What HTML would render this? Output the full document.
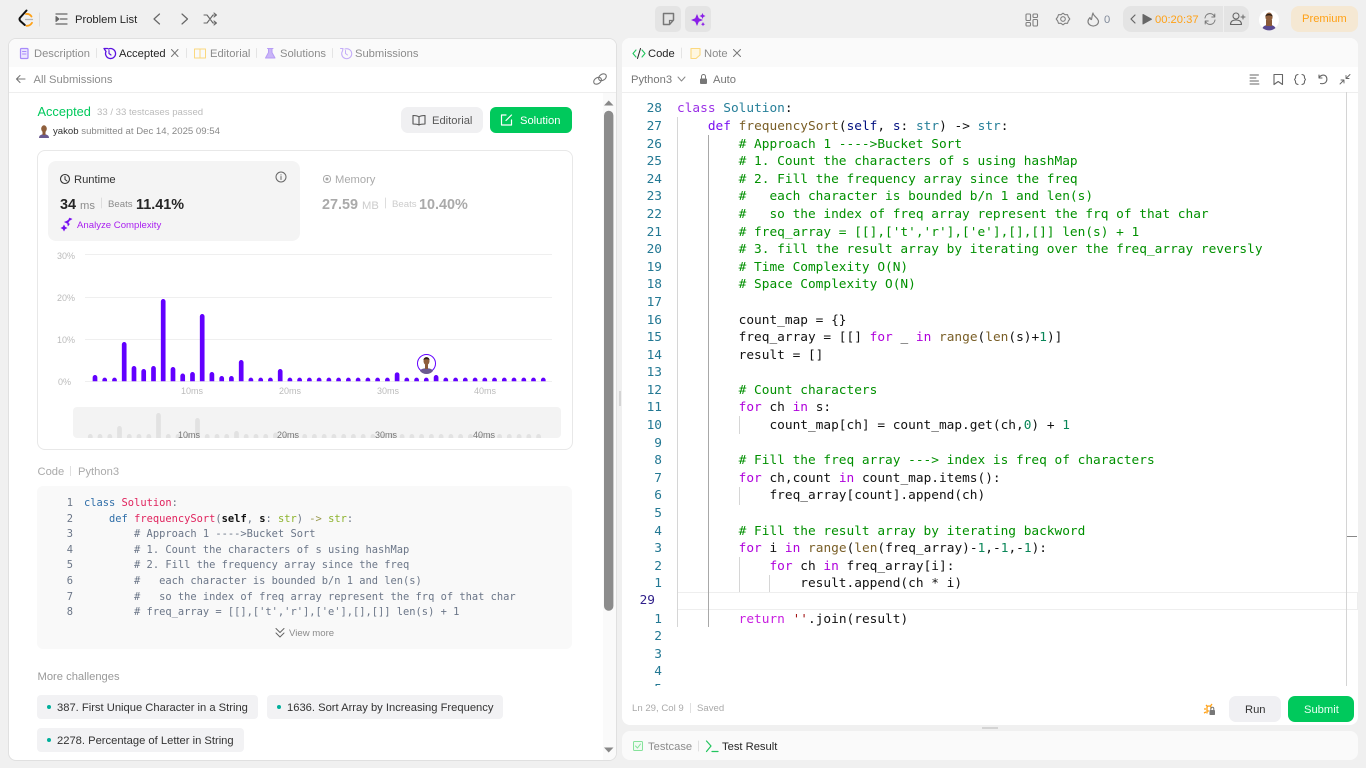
<!DOCTYPE html>
<html lang="en"><head><meta charset="utf-8"><title>Submission</title>
<style>
*{box-sizing:border-box}
html,body{margin:0;padding:0;width:1366px;height:768px;overflow:hidden;background:#f0f0f0;font-family:"Liberation Sans",sans-serif;color:#262626}
.a{position:absolute;white-space:nowrap;line-height:14px;font-size:11.2px;margin-top:1px}
.b{position:absolute}
.g{color:#8c8c8c}
pre{margin:0;position:absolute;white-space:pre;font-family:"DejaVu Sans Mono",monospace}
#ed{left:677px;top:100.4px;font-size:12.8px;line-height:17.586px;color:#111}
#ln{left:630px;width:32px;top:100.4px;height:585.3px;overflow:hidden;font-size:12.8px;line-height:17.586px;color:#237893;text-align:right}
.k1{color:#9a2fe6}.k2{color:#7a10f0}.k3{color:#af00db}.ty{color:#267f99}.fn{color:#795e26}.v{color:#001080}.c{color:#009000}.n{color:#098658}.s{color:#a31515}
.s2{color:#c81fe0}
#sc{left:84px;top:496px;font-size:10.4px;line-height:15.6px;color:#6b7688}
#sn{left:50px;width:23px;top:496px;font-size:10.4px;line-height:15.6px;color:#6b7688;text-align:right}
.h1{color:#2f6ea8}.h2{color:#e0245e}.h3{color:#111;font-weight:bold}.h4{color:#8db32c}.h5{color:#9a9a50}
.sep{position:absolute;width:1px;background:#e0e0e0}
.chip{position:absolute;background:#f2f2f4;border-radius:4px;height:24px}
.dot{position:absolute;left:10px;top:10px;width:4px;height:4px;border-radius:50%;background:#00af9b}
.chip span{position:absolute;left:20px;top:5px;font-size:11.2px;line-height:14px;color:#333;white-space:nowrap}
svg{position:absolute;overflow:visible}
</style></head><body>

<!-- panels -->
<div class="b" style="left:8px;top:38px;width:608.5px;height:722.5px;background:#fff;border:1px solid #e0e0e0;border-radius:8px;overflow:hidden">
  <div class="b" style="left:0;top:0;width:607px;height:28px;background:#fafafa"></div>
  <div class="b" style="left:0;top:53px;width:607px;height:1px;background:#eee"></div>
  <div class="b" style="left:594px;top:54px;width:14px;height:670px;background:#fafafa"></div>
</div>
<div class="b" style="left:622px;top:38px;width:736px;height:687px;background:#fff;border-radius:8px;overflow:hidden">
  <div class="b" style="left:0;top:0;width:736px;height:29px;background:#fafafa"></div>
  <div class="b" style="left:0;top:54px;width:736px;height:1px;background:#eee"></div>
</div>
<div class="b" style="left:622px;top:731px;width:736px;height:29px;background:#fafafa;border-radius:8px"></div>
<div class="b" style="left:618.5px;top:391px;width:2px;height:15px;background:#d4d4d4"></div>
<div class="b" style="left:982px;top:727px;width:16px;height:2px;background:#d4d4d4"></div>

<!-- top bar -->
<svg style="left:0;top:0" width="1366" height="38" fill="none" stroke-linecap="round" stroke-linejoin="round">
  <path d="M26.500 10.500L19.800 18Q19 19.500 20.300 21L24.800 25" stroke="#111" stroke-width="2"/>
  <path d="M26 14Q29.500 13.500 31.500 16.500" stroke="#ffa116" stroke-width="1.800"/>
  <path d="M26.500 25.800Q30 26 32 22.800" stroke="#ffa116" stroke-width="1.800"/>
  <path d="M25.500 19.500H32.500" stroke="#b3b3b3" stroke-width="1.200"/>
  <path d="M39.500 13V26" stroke="#ddd"/>
  <path d="M56 14H67M60.500 19H67M56 24H67" stroke="#666" stroke-width="1.200"/>
  <path d="M56 16.500L59 19L56 21.500Z" fill="#666" stroke="#666"/>
  <path d="M159.500 14L154 19L159.500 24M182 14L187.500 19L182 24" stroke="#666" stroke-width="1.200"/>
  <path d="M204 15H207L213 23H216M204 23H207L213 15H216M214 13L216.500 15L214 17M214 21L216.500 23L214 25" stroke="#666" stroke-width="1.100"/>
</svg>
<div class="a" style="left:75px;top:11.500px">Problem List</div>

<div class="b" style="left:655px;top:6px;width:26px;height:26px;background:#e4e4e4;border-radius:5px"></div>
<div class="b" style="left:685px;top:6px;width:26px;height:26px;background:#e4e4e4;border-radius:5px"></div>
<svg style="left:0;top:0" width="1366" height="38" fill="none">
  <path d="M663.500 13.500H673.500V20L669.500 24.500H663.500Z" stroke="#777" stroke-width="1.500" stroke-linejoin="round"/>
  <path d="M669.500 24.500V20.500H673.500" stroke="#777" stroke-width="1.200"/>
  <path d="M697 14L698.800 18.200L703 20L698.800 21.800L697 26L695.200 21.800L691 20L695.200 18.200Z M702.500 13L703.400 15L705.500 16L703.400 17L702.500 19L701.600 17L699.500 16L701.600 15Z M703 22L703.700 23.500L705 24.200L703.700 24.900L703 26.200L702.300 24.900L701 24.200L702.300 23.500Z" fill="#8a1fe8"/>
  <g stroke="#808080" stroke-width="1.100">
    <rect x="1026" y="14" width="4.500" height="6.500" rx="1"/><rect x="1033" y="14" width="4.500" height="3.500" rx="1"/><rect x="1026" y="22.500" width="4.500" height="3.500" rx="1"/><rect x="1033" y="19.500" width="4.500" height="6.500" rx="1"/>
    <path d="M1063 13.200L1065 14.700L1067.500 14.700L1068.300 17L1069.800 19L1068.300 21L1067.500 23.300L1065 23.300L1063 24.800L1061 23.300L1058.500 23.300L1057.700 21L1056.200 19L1057.700 17L1058.500 14.700L1061 14.700Z" stroke-linejoin="round"/>
    <circle cx="1063" cy="19" r="2.300"/>
    <path d="M1093 13C1093 16 1098.500 18 1098.500 21.500A5.200 4.500 0 0 1 1088 21.500C1088 20 1089 18.500 1090 17.500C1090.300 19 1091 19.500 1091.500 19.500C1092 17.500 1092 15 1093 13Z" stroke-width="1.200" stroke-linejoin="round"/>
  </g>
</svg>
<div class="a" style="left:1104px;top:11.500px;color:#808a9a">0</div>

<div class="b" style="left:1123px;top:6px;width:126px;height:26px;background:#e4e4e4;border-radius:8px"></div>
<div class="b" style="left:1223px;top:6px;width:1px;height:26px;background:#f0f0f0"></div>
<svg style="left:0;top:0" width="1366" height="38" fill="none" stroke-linecap="round" stroke-linejoin="round">
  <path d="M1135 15L1131 19L1135 23" stroke="#666" stroke-width="1.200"/>
  <path d="M1143 14.500V24L1151.500 19.200Z" fill="#666" stroke="#666" stroke-width="1"/>
  <path d="M1205 18A5 5 0 0 1 1214.500 16.500M1215 20A5 5 0 0 1 1205.500 21.500M1214.800 14V17H1211.800M1205.200 24V21H1208.200" stroke="#777" stroke-width="1"/>
  <circle cx="1236" cy="16" r="3" stroke="#666" stroke-width="1.100"/>
  <path d="M1230.500 24.500C1230.500 21 1233 20 1236 20C1239 20 1241.500 21 1241.500 24.500Z" stroke="#666" stroke-width="1.100"/>
  <path d="M1241 17H1245M1243 15V19" stroke="#666" stroke-width="1"/>
</svg>
<div class="a" style="left:1155px;top:11.500px;color:#ffa116">00:20:37</div>

<svg style="left:1259px;top:10px" width="20" height="20" viewBox="0 0 20 20">
  <circle cx="10" cy="10" r="10" fill="#fff"/>
  <path d="M3.500 18C5 15 8 15 10 14.500C12 15 15 15 16.500 18A10 10 0 0 1 3.500 18Z" fill="#5a4a90"/>
  <rect x="7" y="10" width="6" height="6" fill="#8a5a3a"/>
  <ellipse cx="10" cy="7" rx="3.600" ry="4.500" fill="#8f5f3c"/>
  <path d="M6.400 6.500C6.400 3 13.600 3 13.600 6.500C12 5 8 5 6.400 6.500Z" fill="#2b1d14"/>
</svg>
<div class="b" style="left:1291px;top:6px;width:67px;height:26px;background:#f5e8d3;border-radius:8px"></div>
<div class="a" style="left:1302px;top:10.500px;color:#ffa116">Premium</div>

<!-- left tabs -->
<svg style="left:0;top:0" width="620" height="140" fill="none" stroke-linecap="round" stroke-linejoin="round">
  <rect x="20.500" y="48.500" width="7.500" height="10" rx="1" stroke="#a78bfa" fill="#ece6fe" stroke-width="1.200"/>
  <path d="M22.500 51.500H26M22.500 54H26" stroke="#a78bfa"/>
  <path d="M104 48.500H107.500M104 48.500L106 51.500A5 5 0 1 0 108.500 49" stroke="#5b12e0" stroke-width="1.300"/>
  <path d="M109 50.500V53.500L111 55" stroke="#5b12e0" stroke-width="1.100"/>
  <path d="M171.500 49.500L178 56.500M178 49.500L171.500 56.500" stroke="#777" stroke-width="1"/>
  <path d="M194.500 49H200V58H194.500ZM200 49H205.500V58H200Z" stroke="#fbd87f" stroke-width="1"/>
  <path d="M267.500 48.500H273M268.500 48.500V52.500L265.500 58H275L272 52.500V48.500" stroke="#b79cf5" fill="#c9b5f8" stroke-width="1"/>
  <path d="M340.500 48.500H343L342.500 51A5 5 0 1 0 345 49" stroke="#c4adf8" stroke-width="1.100"/>
  <path d="M345.500 50.500V53.500L347.500 55" stroke="#c4adf8" stroke-width="1"/>
  <path d="M96.500 48.500V57.500M186.500 48.500V57.500M256.500 48.500V57.500M332.500 48.500V57.500" stroke="#e4e4e4"/>
  <path d="M25 79H16.500M20 75.500L16.500 79L20 82.500" stroke="#777" stroke-width="1.100"/>
  <g stroke="#777" stroke-width="1.100" transform="rotate(-35 600 79)"><ellipse cx="597" cy="79" rx="4.200" ry="3"/><ellipse cx="603" cy="79" rx="4.200" ry="3"/></g>
</svg>
<div class="a g" style="left:34px;top:46px">Description</div>
<div class="a" style="left:119px;top:46px">Accepted</div>
<div class="a g" style="left:210px;top:46px">Editorial</div>
<div class="a g" style="left:280px;top:46px">Solutions</div>
<div class="a g" style="left:355px;top:46px">Submissions</div>
<div class="a g" style="left:33.500px;top:72px">All Submissions</div>

<!-- scroll -->
<svg style="left:0;top:0" width="620" height="768">
  <path d="M604 105.500L608.700 100.500L613.500 105.500Z" fill="#888"/>
  <path d="M604 115.500A4.700 4.700 0 0 1 613.400 115.500V606A4.700 4.700 0 0 1 604 606Z" fill="#8c8c8c"/>
  <path d="M604 747.500H613.500L608.700 752.500Z" fill="#888"/>
</svg>

<!-- accepted header -->
<div class="a" style="left:37.500px;top:104px;font-size:12.800px;color:#00c95c">Accepted</div>
<div class="a" style="left:97px;top:105px;font-size:9.600px;color:#bbb">33 / 33 testcases passed</div>
<svg style="left:38px;top:125px" width="12" height="13" viewBox="0 0 12 13">
  <path d="M1 13C1 10 3.500 9.500 6 9C8.500 9.500 11 10 11 13Z" fill="#6a5a90"/><rect x="4.500" y="6" width="3" height="4" fill="#8a5a3a"/><ellipse cx="6" cy="3.800" rx="2.800" ry="3.500" fill="#8f5f3c"/>
</svg>
<div class="a" style="left:53px;top:124px;font-size:9.600px;color:#888"><span style="color:#333">yakob</span> submitted at Dec 14, 2025 09:54</div>

<div class="b" style="left:401px;top:107px;width:82px;height:26px;background:#f0f0f2;border-radius:7px"></div>
<div class="a" style="left:432px;top:112.500px;color:#595959">Editorial</div>
<div class="b" style="left:490px;top:107px;width:82px;height:26px;background:#00c95c;border-radius:6px"></div>
<div class="a" style="left:520px;top:112.500px;color:#fff">Solution</div>
<svg style="left:0;top:0" width="620" height="140" fill="none" stroke-linecap="round" stroke-linejoin="round">
  <path d="M419 117C417.500 115.500 415 115.500 413 115.500V124C415 124 417.500 124 419 125C420.500 124 423 124 425 124V115.500C423 115.500 420.500 115.500 419 117ZM419 117V125" stroke="#555" stroke-width="1.100"/>
  <path d="M506 115H501.500V125H511.500V120M506 120.500L511.500 115" stroke="#fff" stroke-width="1.200"/>
</svg>

<!-- card -->
<div class="b" style="left:37px;top:150px;width:535.500px;height:300px;border:1px solid #e8e8e8;border-radius:8px"></div>
<div class="b" style="left:48px;top:161px;width:252px;height:80px;background:#f4f4f4;border-radius:8px"></div>
<svg style="left:0;top:150px" width="620" height="90" fill="none" stroke-linecap="round" stroke-linejoin="round">
  <circle cx="65" cy="29" r="4.500" stroke="#333" stroke-width="1.100"/><path d="M65 26.500V29.500L67 31" stroke="#333"/>
  <circle cx="281" cy="27" r="5" stroke="#666"/><path d="M281 26.500V29.500M281 24.800V25" stroke="#666"/>
  <path d="M68 73L69.500 70.500L72 69L69.500 68L68.500 70L67 71L64.500 72L67.500 73.500L68 76L69.500 74ZM64 75L65 77L67 78L65 79L64 81L63 79L61 78L63 77Z" fill="#6a10f0" stroke="#8a20f0" stroke-width=".6"/>
  <rect x="323.500" y="25.500" width="7" height="7" rx="3" stroke="#aaa"/><circle cx="327" cy="29" r="1.500" fill="#aaa"/>
  <path d="M101.500 48V58M385.500 48V58" stroke="#ddd"/>
</svg>
<div class="a" style="left:74px;top:172px;color:#333">Runtime</div>
<div class="a" style="left:60px;top:197px;font-size:14.400px;font-weight:bold">34</div>
<div class="a g" style="left:80px;top:197.500px">ms</div>
<div class="a g" style="left:108px;top:196.500px;font-size:9.600px">Beats</div>
<div class="a" style="left:136px;top:197px;font-size:14.400px;font-weight:bold">11.41%</div>
<div class="a" style="left:77px;top:218px;font-size:9.600px;color:#a91ff0">Analyze Complexity</div>
<div class="a" style="left:335px;top:172px;color:#aaa">Memory</div>
<div class="a" style="left:322px;top:197px;font-size:14.400px;font-weight:bold;color:#aaa">27.59</div>
<div class="a" style="left:362px;top:197.500px;color:#ccc">MB</div>
<div class="a" style="left:392px;top:196.500px;font-size:9.600px;color:#ccc">Beats</div>
<div class="a" style="left:419px;top:197px;font-size:14.400px;font-weight:bold;color:#aaa">10.40%</div>

<!-- chart -->
<svg style="left:0;top:0" width="620" height="460" font-family="Liberation Sans,sans-serif">
  <defs>
    <clipPath id="c1"><rect x="80" y="250" width="480" height="131.300"/></clipPath>
    <clipPath id="c2"><rect x="73" y="407" width="488" height="31"/></clipPath>
  </defs>
  <path d="M85 254.500H552M85 297.500H552M85 339.500H552M85 381.500H552" stroke="#efefef" fill="none"/>
  <g font-size="9" fill="#bbb">
    <text x="57" y="259">30%</text><text x="57" y="301">20%</text><text x="57" y="343">10%</text><text x="58" y="385">0%</text>
    <text x="181" y="394">10ms</text><text x="279" y="394">20ms</text><text x="377" y="394">30ms</text><text x="474" y="394">40ms</text>
  </g>
  <path clip-path="url(#c1)" stroke="#6200ff" stroke-width="4.700" stroke-linecap="round" fill="none" d="M95 386V377.400M104.700 386V380M114.500 386V380M124.200 386V344.400M134 386V368.400M143.700 386V371.400M153.500 386V368.400M163.200 386V301.400M173 386V369.400M182.700 386V375.900M192.500 386V374.400M202.200 386V316.400M211.900 386V374.400M221.700 386V378.400M231.400 386V378.400M241.200 386V362.400M250.900 386V380M260.700 386V380M270.400 386V380M280.200 386V371.400M289.900 386V380M299.600 386V380M309.400 386V380M319.100 386V380M328.900 386V380M338.600 386V380M348.400 386V380M358.100 386V380M367.900 386V380M377.600 386V380M387.400 386V380M397.100 386V374.700M406.800 386V380M416.600 386V380M426.300 386V380M436.100 386V377.400M445.800 386V380M455.600 386V380M465.300 386V380M475.100 386V380M484.800 386V380M494.500 386V380M504.300 386V380M514 386V380M523.800 386V380M533.500 386V380M543.300 386V380"/>
  <circle cx="426.500" cy="363.500" r="9" fill="#fff" stroke="#6200ff" stroke-width="1"/>
  <path d="M420 371C421 368.500 424 368.500 426.500 368C429 368.500 432 368.500 433 371A8.500 8.500 0 0 1 420 371Z" fill="#6a5a90"/>
  <rect x="425" y="364" width="3" height="5" fill="#8a5a3a"/><ellipse cx="426.500" cy="361" rx="3" ry="4" fill="#8f5f3c"/>
  <path d="M423.500 360C423.500 356.500 429.500 356.500 429.500 360C428 359 425 359 423.500 360Z" fill="#2b1d14"/>
  <rect x="73" y="407" width="488" height="31" rx="4" fill="#f3f3f3"/>
  <path clip-path="url(#c2)" stroke="#e2e2e2" stroke-width="4.700" stroke-linecap="round" fill="none" d="M90.300 442V436.400M100 442V436.400M109.800 442V436.400M119.500 442V428.400M129.300 442V436.400M139 442V436.400M148.800 442V436.400M158.500 442V415.400M168.300 442V436.400M178 442V436.400M187.800 442V436.400M197.500 442V420.400M207.200 442V436.400M217 442V436.400M226.700 442V436.400M236.500 442V433.400M246.200 442V436.400M256 442V436.400M265.700 442V436.400M275.500 442V435M285.200 442V436.400M294.900 442V436.400M304.700 442V436.400M314.400 442V436.400M324.200 442V436.400M333.900 442V436.400M343.700 442V436.400M353.400 442V436.400M363.200 442V436.400M372.900 442V436.400M382.700 442V436.400M392.400 442V435.500M402.100 442V436.400M411.900 442V436.400M421.600 442V436.400M431.400 442V436.400M441.100 442V436.400M450.900 442V436.400M460.600 442V436.400M470.400 442V436.400M480.100 442V436.400M489.800 442V436.400M499.600 442V436.400M509.300 442V436.400M519.100 442V436.400M528.800 442V436.400M538.600 442V436.400"/>
  <g font-size="9" fill="#777">
    <text x="178" y="438">10ms</text><text x="277" y="438">20ms</text><text x="375" y="438">30ms</text><text x="473" y="438">40ms</text>
  </g>
</svg>

<!-- code preview -->
<div class="a" style="left:37.500px;top:464px;color:#aaa">Code</div>
<div class="sep" style="left:70px;top:466px;height:10px"></div>
<div class="a" style="left:78px;top:464px;color:#aaa">Python3</div>
<div class="b" style="left:37px;top:486px;width:535px;height:163px;background:#f9f9f9;border-radius:6px"></div>
<pre id="sn">1
2
3
4
5
6
7
8</pre>
<pre id="sc"><span class="h1">class</span> <span class="h2">Solution</span>:
    <span class="h1">def</span> <span class="h2">frequencySort</span>(<span class="h3">self</span>, <span class="h3">s</span>: <span class="h4">str</span>) <span class="h5">-&gt;</span> <span class="h4">str</span>:
        # Approach 1 ----&gt;Bucket Sort
        # 1. Count the characters of s using hashMap
        # 2. Fill the frequency array since the freq
        #   each character is bounded b/n 1 and len(s)
        #   so the index of freq array represent the frq of that char
        # freq_array = [[],['t','r'],['e'],[],[]] len(s) + 1</pre>
<svg style="left:0;top:0" width="620" height="660" fill="none" stroke="#666" stroke-linecap="round" stroke-linejoin="round">
  <path d="M276 628.500L280 632.500L284 628.500M276 633L280 637L284 633" stroke-width="1"/>
</svg>
<div class="a g" style="left:289px;top:626px;font-size:9.600px">View more</div>

<div class="a" style="left:37.500px;top:669px;color:#999">More challenges</div>
<div class="chip" style="left:37px;top:695px;width:221px"><i class="dot"></i><span style="top:6px">387. First Unique Character in a String</span></div>
<div class="chip" style="left:267px;top:695px;width:236px"><i class="dot" style="left:9.500px"></i><span style="top:6px">1636. Sort Array by Increasing Frequency</span></div>
<div class="chip" style="left:37px;top:728px;width:207px"><i class="dot"></i><span style="top:6px">2278. Percentage of Letter in String</span></div>

<!-- right tabs -->
<svg style="left:0;top:0" width="1366" height="100" fill="none" stroke-linecap="round" stroke-linejoin="round">
  <path d="M636 50L633 53.500L636 57M642 50L645 53.500L642 57" stroke="#22c55e" stroke-width="1.100"/>
  <path d="M640.500 48.500L637.500 58.500" stroke="#222" stroke-width="1"/>
  <path d="M681.500 48V58" stroke="#e4e4e4"/>
  <path d="M691 48.500H700V55L696 58.500H691Z" stroke="#fbd87f" fill="#fff7e0" stroke-width="1.100"/>
  <path d="M733.500 49.500L740.500 56.500M740.500 49.500L733.500 56.500" stroke="#777" stroke-width="1"/>
  <path d="M678 77L681.500 81L685 77" stroke="#888" stroke-width="1"/>
  <rect x="700" y="78.500" width="7" height="5.500" rx="1" fill="#777"/>
  <path d="M701.500 78.500V76.500A2 2 0 0 1 705.500 76.500V78.500" stroke="#777"/>
  <path d="M1250 75H1258.500M1250 78H1256M1250 81H1258.500M1250 84H1259" stroke="#666" stroke-width=".9"/>
  <path d="M1274 74.500H1282.500V84.500L1278.200 81.500L1274 84.500Z" stroke="#666" stroke-width="1.100"/>
  <path d="M1298 74.500Q1295.500 75 1295.500 77V78L1294.500 79.500L1295.500 81V82Q1295.500 84 1298 84.500M1302 74.500Q1304.500 75 1304.500 77V78L1305.500 79.500L1304.500 81V82Q1304.500 84 1302 84.500" stroke="#666" stroke-width="1.100"/>
  <path d="M1319 75V78H1322M1319 78C1320 75.500 1323 74.500 1325 75.500C1327 76.500 1327.500 80 1326 82C1325 83.500 1322.500 84 1320.500 83.500" stroke="#666" stroke-width="1.100"/>
  <path d="M1346 78.500L1350 74.500M1346 75.500V78.500H1349M1344 80L1340 84M1341 80H1344V83" stroke="#666" stroke-width=".9"/>
</svg>
<div class="a" style="left:648px;top:46px">Code</div>
<div class="a g" style="left:704px;top:46px">Note</div>
<div class="a" style="left:631px;top:72px;color:#777">Python3</div>
<div class="a" style="left:713px;top:72px;color:#777">Auto</div>

<!-- editor -->
<div class="b" style="left:677px;top:592px;width:681px;height:18px;border:1px solid #eee;border-left:none"></div>
<div class="b" style="left:677px;top:117px;width:1px;height:510px;background:#d6d6d6"></div>
<div class="b" style="left:708px;top:135px;width:1px;height:492px;background:#a8a8a8"></div>
<div class="b" style="left:739px;top:416px;width:1px;height:18px;background:#d6d6d6"></div>
<div class="b" style="left:739px;top:487px;width:1px;height:17.500px;background:#d6d6d6"></div>
<div class="b" style="left:739px;top:557px;width:1px;height:35px;background:#d6d6d6"></div>
<div class="b" style="left:769px;top:575px;width:1px;height:17px;background:#d6d6d6"></div>
<div class="b" style="left:1346px;top:92px;width:1px;height:594px;background:#d4d4d4"></div>
<div class="b" style="left:1347px;top:535.500px;width:10px;height:1.500px;background:#888"></div>
<pre id="ln">28
27
26
25
24
23
22
21
20
19
18
17
16
15
14
13
12
11
10
9
8
7
6
5
4
3
2
1
<span style="position:relative;left:-7px;top:-1px;color:#2f1f8a">29</span>
1
2
3
4
5</pre>
<pre id="ed"><span class="k1">class</span> <span class="ty">Solution</span>:
    <span class="k2">def</span> <span class="fn">frequencySort</span>(<span class="v">self</span>, <span class="v">s</span>: <span class="ty">str</span>) -&gt; <span class="ty">str</span>:
<span class="c">        # Approach 1 ----&gt;Bucket Sort
        # 1. Count the characters of s using hashMap
        # 2. Fill the frequency array since the freq
        #   each character is bounded b/n 1 and len(s)
        #   so the index of freq array represent the frq of that char
        # freq_array = [[],['t','r'],['e'],[],[]] len(s) + 1
        # 3. fill the result array by iterating over the freq_array reversly
        # Time Complexity O(N)
        # Space Complexity O(N)</span>

        count_map = {}
        freq_array = [[] <span class="k3">for</span> _ <span class="k3">in</span> <span class="fn">range</span>(<span class="fn">len</span>(s)+<span class="n">1</span>)]
        result = []

<span class="c">        # Count characters</span>
        <span class="k3">for</span> ch <span class="k3">in</span> s:
            count_map[ch] = count_map.get(ch,<span class="n">0</span>) + <span class="n">1</span>

<span class="c">        # Fill the freq array ---&gt; index is freq of characters</span>
        <span class="k3">for</span> ch,count <span class="k3">in</span> count_map.items():
            freq_array[count].append(ch)

<span class="c">        # Fill the result array by iterating backword</span>
        <span class="k3">for</span> i <span class="k3">in</span> <span class="fn">range</span>(<span class="fn">len</span>(freq_array)-<span class="n">1</span>,-<span class="n">1</span>,-<span class="n">1</span>):
            <span class="k3">for</span> ch <span class="k3">in</span> freq_array[i]:
                result.append(ch * i)

        <span class="s2">return</span> <span class="s">''</span>.join(result)</pre>

<!-- footer -->
<div class="a" style="left:632px;top:701px;font-size:9.600px;color:#aaa">Ln 29, Col 9</div>
<div class="sep" style="left:690px;top:703px;height:10px"></div>
<div class="a" style="left:697px;top:701px;font-size:9.600px;color:#aaa">Saved</div>
<svg style="left:1203px;top:702px" width="14" height="14" fill="none">
  <path d="M3 3L4.500 4.500M9 2L7.500 4M1 7H3M1 11L3 10M4 11.500V5.500C4 3.500 8 3.500 8 5.500V7M4 9H6" stroke="#ffa116" stroke-width="1.300"/>
  <rect x="6.500" y="8" width="5.500" height="5" rx=".8" fill="#777"/>
  <path d="M7.800 8V6.800A1.500 1.500 0 0 1 10.800 6.800V8" stroke="#777"/>
</svg>
<div class="b" style="left:1229px;top:696px;width:52px;height:26px;background:#f0f0f3;border-radius:7px"></div>
<div class="a" style="left:1245px;top:701.500px;color:#333">Run</div>
<div class="b" style="left:1288px;top:696px;width:66px;height:26px;background:#00c95c;border-radius:7px"></div>
<div class="a" style="left:1304px;top:701.500px;color:#e8fff2">Submit</div>

<!-- testcase bar -->
<svg style="left:0;top:731px" width="800" height="30" fill="none" stroke-linecap="round" stroke-linejoin="round">
  <rect x="633.500" y="10.500" width="9" height="9" rx="1" stroke="#86e29b" fill="#f0fbf2"/>
  <path d="M635.500 15L637.500 17L640.500 13" stroke="#86e29b"/>
  <path d="M698.500 10V20" stroke="#e0e0e0"/>
  <path d="M706.500 10L711 15L706.500 20.500" stroke="#22c55e" stroke-width="1.200"/>
  <path d="M712 20.500H718" stroke="#22c55e" stroke-width="1.200"/>
</svg>
<div class="a g" style="left:648px;top:739px">Testcase</div>
<div class="a" style="left:722px;top:739px">Test Result</div>
</body></html>
